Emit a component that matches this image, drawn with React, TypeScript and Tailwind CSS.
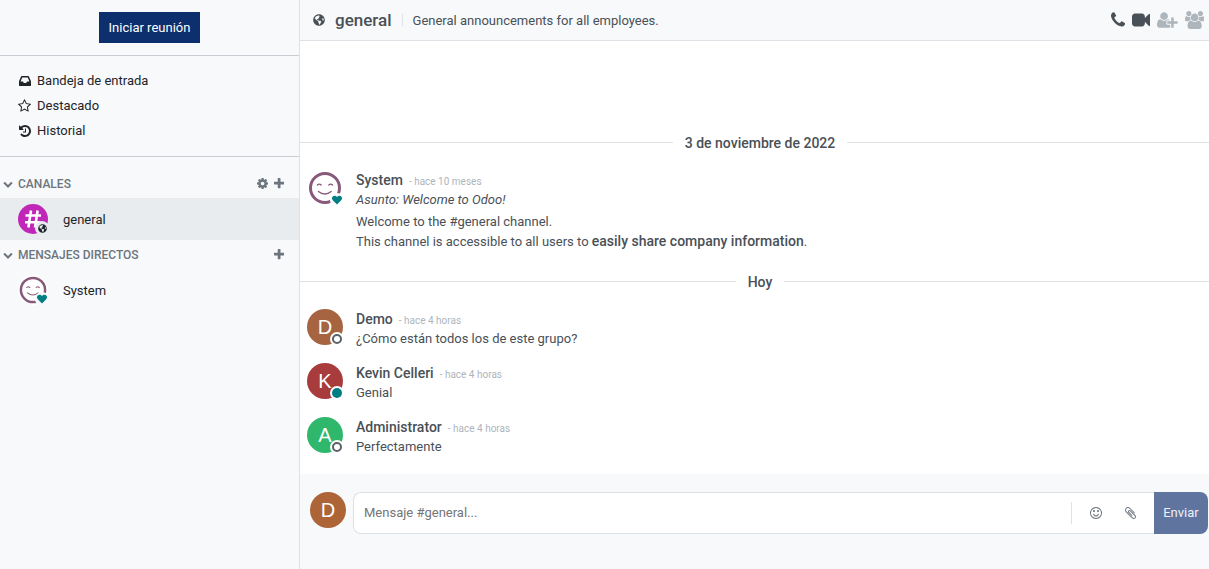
import type { ReactNode } from "react";
import { FaGlobeAmericas } from "react-icons/fa";

const icons = {
  inbox: {
    box: "128 0 1536 1792",
    d: "M1151 960h316q-1-3-2.5-8t-2.5-8l-212-496h-708l-212 496q-1 2-2.5 8t-2.5 8h316l95 192h320zm513 30v482q0 26-19 45t-45 19h-1408q-26 0-45-19t-19-45v-482q0-62 25-123l238-552q10-25 36.5-42t52.5-17h832q26 0 52.5 17t36.5 42l238 552q25 61 25 123z",
  },
  star: {
    box: "64 0 1664 1792",
    d: "M1201 1004l306-297-422-62-189-382-189 382-422 62 306 297-73 421 378-199 377 199zm527-357q0 22-26 48l-363 354 86 500q1 7 1 20 0 50-41 50-19 0-40-12l-449-236-449 236q-22 12-40 12-21 0-31.5-14.5t-10.5-35.5q0-6 2-20l86-500-364-354q-25-27-25-48 0-37 56-46l502-73 225-455q19-41 49-41t49 41l225 455 502 73q56 9 56 46z",
  },
  history: {
    box: "128 0 1536 1792",
    d: "M1664 896q0 156-61 298t-164 245-245 164-298 61q-172 0-327-72.5t-264-204.5q-7-10-6.5-22.5t8.5-20.5l137-138q10-9 25-9 16 2 23 12 73 95 179 147t225 52q104 0 198.5-40.5t163.5-109.5 109.5-163.5 40.5-198.5-40.5-198.5-109.5-163.5-163.5-109.5-198.5-40.5q-98 0-188 35.5t-160 101.5l137 138q31 30 14 69-17 40-59 40h-448q-26 0-45-19t-19-45v-448q0-42 40-59 39-17 69 14l130 129q107-101 244.5-156.5t284.5-55.5q156 0 298 61t245 164 164 245 61 298zm-640-288v448q0 14-9 23t-23 9h-320q-14 0-23-9t-9-23v-64q0-14 9-23t23-9h224v-352q0-14 9-23t23-9h64q14 0 23 9t9 23z",
  },
  chevron: {
    box: "0 0 1792 1792",
    d: "M1683 808l-742 741q-19 19-45 19t-45-19l-742-741q-19-19-19-45.5t19-45.5l166-165q19-19 45-19t45 19l531 531 531-531q19-19 45-19t45 19l166 165q19 19 19 45.5t-19 45.5z",
  },
  cog: {
    box: "128 0 1536 1792",
    d: "M1152 896q0-106-75-181t-181-75-181 75-75 181 75 181 181 75 181-75 75-181zm512-109v222q0 12-8 23t-20 13l-185 28q-19 54-39 91 35 50 107 138 10 12 10 25t-9 23q-27 37-99 108t-94 71q-12 0-26-9l-138-108q-44 23-91 38-16 136-29 186-7 28-36 28h-222q-14 0-24.5-8.5t-11.5-21.5l-28-184q-49-16-90-37l-141 107q-10 9-25 9-14 0-25-11-126-114-165-168-7-10-7-23 0-12 8-23 15-21 51-66.5t54-70.5q-27-50-41-99l-183-27q-13-2-21-12.5t-8-23.5v-222q0-12 8-23t19-13l186-28q14-46 39-92-40-57-107-138-10-12-10-24 0-10 9-23 26-36 98.5-107.5t94.5-71.5q13 0 26 10l138 107q44-23 91-38 16-136 29-186 7-28 36-28h222q14 0 24.5 8.5t11.5 21.5l28 184q49 16 90 37l142-107q9-9 24-9 13 0 25 10 129 119 165 170 7 8 7 22 0 12-8 23-15 21-51 66.5t-54 70.5q26 50 41 98l183 28q13 2 21 12.5t8 23.5z",
  },
  plus: {
    box: "192 0 1408 1792",
    d: "M1600 736v192q0 40-28 68t-68 28h-416v416q0 40-28 68t-68 28h-192q-40 0-68-28t-28-68v-416h-416q-40 0-68-28t-28-68v-192q0-40 28-68t68-28h416v-416q0-40 28-68t68-28h192q40 0 68 28t28 68v416h416q40 0 68 28t28 68z",
  },
  phone: {
    box: "192 0 1408 1792",
    d: "M1600 1240q0 27-10 70.5t-21 68.5q-21 50-122 106-94 51-186 51-27 0-52.5-3.5t-57.5-12.5-47.5-14.5-55.5-20.5-49-18q-98-35-175-83-128-79-264.5-215.5t-215.5-264.5q-48-77-83-175-3-9-18-49t-20.5-55.5-14.5-47.5-12.5-57.5-3.5-52.5q0-92 51-186 56-101 106-122 25-11 68.5-21t70.5-10q14 0 21 3 18 6 53 76 11 19 30 54t35 63.5 31 53.5q3 4 17.5 25t21.5 35.5 7 28.5q0 20-28.5 50t-62 55-62 53-28.5 46q0 9 5 22.5t8.5 20.5 14 24 11.5 19q76 137 174 235t235 174q2 1 19 11.5t24 14 20.5 8.5 22.5 5q18 0 46-28.5t53-62 55-62 50-28.5q14 0 28.5 7t35.5 21.5 25 17.5q25 15 53.5 31t63.5 35 54 30q70 35 76 53 3 7 3 21z",
  },
  video: {
    box: "0 0 1792 1792",
    d: "M1792 352v1088q0 42-39 59-13 5-25 5-27 0-45-19l-403-403v166q0 119-84.5 203.5t-203.5 84.5h-704q-119 0-203.5-84.5t-84.5-203.5v-704q0-119 84.5-203.5t203.5-84.5h704q119 0 203.5 84.5t84.5 203.5v165l403-402q18-19 45-19 12 0 25 5 39 17 39 59z",
  },
  userPlus: {
    box: "0 0 2048 1792",
    d: "M704 896q-159 0-271.5-112.5t-112.5-271.5 112.5-271.5 271.5-112.5 271.5 112.5 112.5 271.5-112.5 271.5-271.5 112.5zm960 128h352q13 0 22.5 9.5t9.5 22.5v192q0 13-9.5 22.5t-22.5 9.5h-352v352q0 13-9.5 22.5t-22.5 9.5h-192q-13 0-22.5-9.5t-9.5-22.5v-352h-352q-13 0-22.5-9.5t-9.5-22.5v-192q0-13 9.5-22.5t22.5-9.5h352v-352q0-13 9.5-22.5t22.5-9.5h192q13 0 22.5 9.5t9.5 22.5v352zm-736 224q0 52 38 90t90 38h256v238q-68 50-171 50h-874q-121 0-194-69t-73-190q0-53 3.5-103.5t14-109 26.5-108.5 43-97.5 62-81 85.5-53.5 111.5-20q19 0 39 17 79 61 154.5 91.5t164.5 30.5 164.5-30.5 154.5-91.5q20-17 39-17 132 0 217 96h-223q-52 0-90 38t-38 90v192z",
  },
  users: {
    box: "0 0 1920 1792",
    d: "M593 896q-162 5-265 128h-134q-82 0-138-40.5t-56-118.5q0-353 124-353 6 0 43.5 21t97.5 42.5 119 21.5q67 0 133-23-5 37-5 66 0 139 81 256zm1071 637q0 120-73 189.5t-194 69.5h-874q-121 0-194-69.5t-73-189.5q0-53 3.5-103.5t14-109 26.5-108.5 43-97.5 62-81 85.5-53.5 111.5-20q10 0 43 21.5t73 48 107 48 135 21.5 135-21.5 107-48 73-48 43-21.5q61 0 111.5 20t85.5 53.5 62 81 43 97.5 26.5 108.5 14 109 3.5 103.5zm-1024-1277q0 106-75 181t-181 75-181-75-75-181 75-181 181-75 181 75 75 181zm704 384q0 159-112.5 271.5t-271.5 112.5-271.5-112.5-112.5-271.5 112.5-271.5 271.5-112.5 271.5 112.5 112.5 271.5zm576 225q0 78-56 118.5t-138 40.5h-134q-103-123-265-128 81-117 81-256 0-29-5-66 66 23 133 23 59 0 119-21.5t97.5-42.5 43.5-21q124 0 124 353zm-128-609q0 106-75 181t-181 75-181-75-75-181 75-181 181-75 181 75 75 181z",
  },
  smile: {
    box: "128 0 1536 1792",
    d: "M1262 1075q-37 121-138 195t-228 74-228-74-138-195q-8-25 4-48.5t38-31.5q25-8 48.5 4t31.5 38q25 80 92.5 129.5t151.5 49.5 151.5-49.5 92.5-129.5q8-26 32-38t49-4 37 31.5 4 48.5zm-494-435q0 53-37.5 90.5t-90.5 37.5-90.5-37.5-37.5-90.5 37.5-90.5 90.5-37.5 90.5 37.5 37.5 90.5zm512 0q0 53-37.5 90.5t-90.5 37.5-90.5-37.5-37.5-90.5 37.5-90.5 90.5-37.5 90.5 37.5 37.5 90.5zm256 256q0-130-51-248.5t-136.5-204-204-136.5-248.5-51-248.5 51-204 136.5-136.5 204-51 248.5 51 248.5 136.5 204 204 136.5 248.5 51 248.5-51 204-136.5 136.5-204 51-248.5zm128 0q0 209-103 385.5t-279.5 279.5-385.5 103-385.5-103-279.5-279.5-103-385.5 103-385.5 279.5-279.5 385.5-103 385.5 103 279.5 279.5 103 385.5z",
  },
  clip: {
    box: "192 0 1408 1792",
    d: "M1596 1385q0 117-79 196t-196 79q-135 0-235-100l-777-776q-113-115-113-271 0-159 110-270t269-111q158 0 273 113l605 606q10 10 10 22 0 16-30.5 46.5t-46.5 30.5q-13 0-23-10l-606-607q-79-77-181-77-106 0-179 75t-73 181q0 105 76 181l776 777q63 63 145 63 64 0 106-42t42-106q0-82-63-145l-581-581q-26-24-60-24-29 0-48 19t-19 48q0 32 25 59l410 410q10 10 10 22 0 16-31 47t-47 31q-12 0-22-10l-410-410q-63-61-63-149 0-82 57-139t139-57q88 0 149 63l581 581q100 98 100 235z",
  },
  heart: {
    box: "0 0 1792 1792",
    d: "M896 1664q-26 0-44-18l-624-602q-10-8-27.5-26t-55.5-65.5-68-97.5-53.5-121-23.5-138q0-220 127-344t351-124q62 0 126.5 21.5t120 58 95.5 68.5 76 68q36-36 76-68t95.5-68.5 120-58 126.5-21.5q224 0 351 124t127 344q0 221-229 450l-623 600q-18 18-44 18z",
  },
};

type IconName = keyof typeof icons;

function Icon({ name, className }: { name: IconName; className: string }) {
  return (
    <svg viewBox={icons[name].box} fill="currentColor" aria-hidden="true" className={"shrink-0 " + className}>
      <path d={icons[name].d} />
    </svg>
  );
}

function Badge({ bg, children }: { bg: string; children: ReactNode }) {
  return (
    <span className={"absolute -right-px -bottom-px flex size-3.5 items-center justify-center rounded-full " + bg}>
      {children}
    </span>
  );
}

function SmileFace({ className }: { className: string }) {
  return (
    <svg viewBox="0 0 36 36" fill="none" strokeLinecap="round" aria-hidden="true" className={className}>
      <circle cx="18" cy="18" r="18" fill="#fff" />
      <circle cx="18" cy="18" r="14.5" stroke="#875a7b" strokeWidth="3" />
      <path d="M10.4 15q1.8-1.9 3.8 0M21.8 15q1.8-1.9 3.8 0M11.4 21.4q6.4 5.2 12.8 0" stroke="#875a7b" strokeWidth="1.3" />
    </svg>
  );
}

function Letter({ letter, color }: { letter: string; color: string }) {
  return (
    <span
      className={
        "flex size-9 items-center justify-center rounded-full font-['Liberation_Sans',sans-serif] text-xl leading-5 text-white " +
        color
      }
    >
      {letter}
    </span>
  );
}

function MailboxLink({ icon, label }: { icon: IconName; label: string }) {
  return (
    <a href="#" className="flex h-[25px] items-center gap-1.5 pl-[18px] text-[#212529]">
      <span className="flex w-[13px] justify-center">
        <Icon name={icon} className="h-[14px]" />
      </span>
      {label}
    </a>
  );
}

function GroupHeader({ label, settings }: { label: string; settings?: boolean }) {
  return (
    <div className="flex h-[29px] items-center gap-1.5 pr-[15px] pl-[3px] text-[#6c757d]">
      <button type="button" className="flex flex-1 items-center gap-[5px] text-xs font-medium uppercase">
        <Icon name="chevron" className="size-[10px]" />
        {label}
      </button>
      {settings && (
        <button type="button" aria-label="Configuración">
          <Icon name="cog" className="h-[13px]" />
        </button>
      )}
      <button type="button" aria-label={"Agregar a " + label}>
        <Icon name="plus" className="h-[13px]" />
      </button>
    </div>
  );
}

function Divider({ label }: { label: string }) {
  return (
    <div className="mt-3 -mr-[11px] mb-2.5 flex h-[21px] items-center gap-3">
      <hr className="flex-1 border-[#dee2e6]" />
      <span className="text-sm font-medium">{label}</span>
      <hr className="flex-1 border-[#dee2e6]" />
    </div>
  );
}

type MessageProps = { author: string; time: string; avatar: ReactNode; status: ReactNode; children: ReactNode };

function Message({ author, time, avatar, status, children }: MessageProps) {
  return (
    <article className="flex gap-[13px] px-[7px] py-[7px]">
      <div className="relative size-9 shrink-0">
        {avatar}
        <Badge bg="bg-white">{status}</Badge>
      </div>
      <div className="leading-5">
        <div className="flex h-5 items-baseline gap-1.5">
          <strong className="text-sm leading-5 font-medium">{author}</strong>
          <span className="text-[10px] text-[#adb5bd]">- {time}</span>
        </div>
        {children}
      </div>
    </article>
  );
}

const offline = <span className="size-[10px] rounded-full border-2 border-[#5a6168]" />;
const online = <span className="size-[10px] rounded-full bg-[#017e84]" />;
const heart = <Icon name="heart" className="size-[10px] text-[#017e84]" />;

export default function App() {
  return (
    <div className="flex h-screen bg-[#f8f9fb] font-[Roboto,sans-serif] text-[13px] leading-5 text-[#495057]">
      <aside className="w-[300px] shrink-0 border-r border-[#dee2e6]">
        <div className="flex justify-center border-b border-[#c9ccd2] py-3">
          <button type="button" className="h-[31px] bg-[#0d2f6e] px-2.5 text-white">
            Iniciar reunión
          </button>
        </div>
        <nav className="border-b border-[#c9ccd2] pt-3 pb-[13px]">
          <MailboxLink icon="inbox" label="Bandeja de entrada" />
          <MailboxLink icon="star" label="Destacado" />
          <MailboxLink icon="history" label="Historial" />
        </nav>
        <div className="pt-3 text-[#212529]">
          <GroupHeader label="Canales" settings />
          <a href="#" className="flex h-[42px] items-center gap-[15px] bg-[#e9ecef] pl-[18px]">
            <span className="relative flex size-[30px] items-center justify-center rounded-full bg-[#c026b8]">
              <svg viewBox="0 0 18 18" className="size-[18px]" fill="none" stroke="#fff" strokeWidth="2.6" aria-hidden="true">
                <path d="M7 0.5L4.4 17.5M13.6 0.5L11 17.5M1.5 5.5H17M1 12.2H16.5" />
              </svg>
              <Badge bg="bg-[#e9ecef]">
                <FaGlobeAmericas className="size-[9px]" />
              </Badge>
            </span>
            <span className="leading-[21px]">general</span>
          </a>
          <GroupHeader label="Mensajes directos" />
          <a href="#" className="flex h-[42px] items-center gap-[15px] pl-[18px]">
            <span className="relative size-[30px]">
              <SmileFace className="size-[30px]" />
              <Badge bg="bg-[#f8f9fb]">{heart}</Badge>
            </span>
            <span className="leading-[21px]">System</span>
          </a>
        </div>
      </aside>

      <main className="flex min-w-0 flex-1 flex-col">
        <header className="flex h-[41px] shrink-0 items-center border-b border-[#dee2e6] pr-[5px] pl-[13px]">
          <FaGlobeAmericas className="size-3" />
          <h1 className="ml-2.5 text-[17px] font-medium">general</h1>
          <div className="mx-2.5 h-3 w-px bg-[#dee2e6]" />
          <p className="flex-1 leading-[21px]">General announcements for all employees.</p>
          <div className="flex items-center gap-[7px]">
            <button type="button" aria-label="Llamada">
              <Icon name="phone" className="h-[18px]" />
            </button>
            <button type="button" aria-label="Videollamada">
              <Icon name="video" className="h-[18px]" />
            </button>
            <button type="button" aria-label="Agregar usuarios" className="text-[#adb5bd]">
              <Icon name="userPlus" className="h-[18px]" />
            </button>
            <button type="button" aria-label="Miembros" className="text-[#adb5bd]">
              <Icon name="users" className="h-[18px]" />
            </button>
          </div>
        </header>

        <section className="flex flex-1 flex-col justify-end overflow-hidden bg-white pb-2.5">
          <Divider label="3 de noviembre de 2022" />
          <Message author="System" time="hace 10 meses" avatar={<SmileFace className="size-9" />} status={heart}>
            <p className="italic">Asunto: Welcome to Odoo!</p>
            <p className="mt-0.5">
              Welcome to the #general channel.
              <br />
              This channel is accessible to all users to{" "}
              <b className="text-sm leading-4 font-medium">easily share company information</b>.
            </p>
          </Message>
          <Divider label="Hoy" />
          <Message author="Demo" time="hace 4 horas" avatar={<Letter letter="D" color="bg-[#a66540]" />} status={offline}>
            <p>¿Cómo están todos los de este grupo?</p>
          </Message>
          <Message author="Kevin Celleri" time="hace 4 horas" avatar={<Letter letter="K" color="bg-[#a83b3b]" />} status={online}>
            <p>Genial</p>
          </Message>
          <Message author="Administrator" time="hace 4 horas" avatar={<Letter letter="A" color="bg-[#2fb76c]" />} status={offline}>
            <p>Perfectamente</p>
          </Message>
        </section>

        <form className="flex pt-[18px] pr-px pb-[35px] pl-2.5" onSubmit={(e) => e.preventDefault()}>
          <Letter letter="D" color="bg-[#ad6538]" />
          <div className="ml-[7px] flex h-[42px] flex-1 items-center rounded-l-lg border border-r-0 border-[#dee2e6] bg-white pr-1.5">
            <input
              type="text"
              aria-label="Mensaje"
              placeholder="Mensaje #general..."
              className="min-w-0 flex-1 bg-transparent px-2.5 outline-none placeholder:text-[#757575]"
            />
            <div className="mr-1.5 h-[22px] w-px bg-[#dee2e6]" />
            <button type="button" aria-label="Emojis" className="flex w-[35px] justify-center text-[#6c757d]">
              <Icon name="smile" className="h-[14px]" />
            </button>
            <button type="button" aria-label="Adjuntar" className="flex w-[35px] justify-center text-[#6c757d]">
              <Icon name="clip" className="h-[14px]" />
            </button>
          </div>
          <button type="submit" className="h-[42px] w-[54px] rounded-r-lg bg-[#5f75a0] text-[#eef0f5]">
            Enviar
          </button>
        </form>
      </main>
    </div>
  );
}
